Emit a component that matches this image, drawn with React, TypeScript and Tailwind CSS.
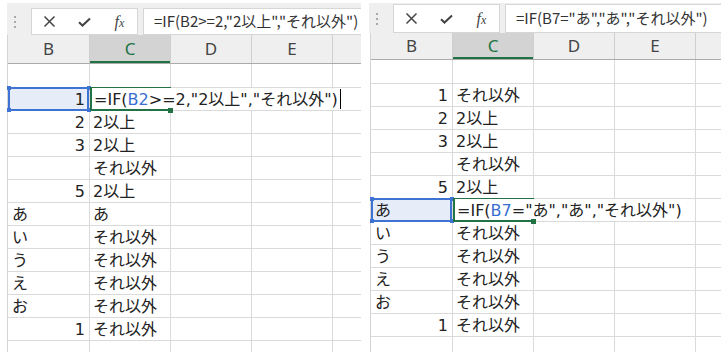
import React from "react";

type Row = { b: string; c?: string; edit?: boolean };
type Part = { t: string; blue?: boolean };

const JP = "font-['Noto_Sans_CJK_JP','Noto_Sans_CJK_SC',sans-serif]";
const CELL = "font-['DejaVu_Sans','Noto_Sans_CJK_JP',sans-serif]";

const leftRows: Row[] = [
  { b: "1", edit: true },
  { b: "2", c: "2以上" },
  { b: "3", c: "2以上" },
  { b: "", c: "それ以外" },
  { b: "5", c: "2以上" },
  { b: "あ", c: "あ" },
  { b: "い", c: "それ以外" },
  { b: "う", c: "それ以外" },
  { b: "え", c: "それ以外" },
  { b: "お", c: "それ以外" },
  { b: "1", c: "それ以外" },
  { b: "" },
];

const rightRows: Row[] = [
  { b: "1", c: "それ以外" },
  { b: "2", c: "2以上" },
  { b: "3", c: "2以上" },
  { b: "", c: "それ以外" },
  { b: "5", c: "2以上" },
  { b: "あ", edit: true },
  { b: "い", c: "それ以外" },
  { b: "う", c: "それ以外" },
  { b: "え", c: "それ以外" },
  { b: "お", c: "それ以外" },
  { b: "1", c: "それ以外" },
  { b: "" },
];

const isNum = (s: string) => /^\d+$/.test(s);

function FormulaBar({ text, barCls, boxCls }: { text: string; barCls: string; boxCls: string }) {
  return (
    <div className={`flex items-start bg-[#efefef] ${barCls}`}>
      {/* grip dots */}
      <div className={`w-[24px] shrink-0 flex flex-col items-start justify-center gap-[3px] pl-[7px] ${boxCls}`}>
        <span className="w-[2px] h-[2px] bg-[#a8a8a8]" />
        <span className="w-[2px] h-[2px] bg-[#a8a8a8]" />
        <span className="w-[2px] h-[2px] bg-[#a8a8a8]" />
      </div>
      <div className={`w-[107px] shrink-0 flex bg-white border border-[#d6d6d6] ${boxCls}`}>
        <div className="w-[35px] flex items-center justify-center">
          <svg width="13" height="13" viewBox="0 0 13 13">
            <path d="M1.5 1.5L11.5 11.5M11.5 1.5L1.5 11.5" stroke="#444" strokeWidth="1.5" fill="none" />
          </svg>
        </div>
        <div className="w-[35px] flex items-center justify-center">
          <svg width="13" height="10" viewBox="0 0 13 10">
            <path d="M1 5.2L4.5 8.5L12 1.4" stroke="#444" strokeWidth="2" fill="none" />
          </svg>
        </div>
        <div className="w-[35px] flex items-center justify-center">
          <span className="font-['Liberation_Serif',serif] italic text-[16px] leading-none text-[#444]">
            f<span className="text-[12px]">x</span>
          </span>
        </div>
      </div>
      <div
        className={`ml-[5px] flex-1 min-w-0 flex items-center overflow-hidden whitespace-nowrap bg-white border border-r-0 border-[#d6d6d6] pl-[10px] text-[15px] text-[#333] ${JP} ${boxCls}`}
      >
        {text}
      </div>
    </div>
  );
}

function Header({ cls }: { cls: string }) {
  return (
    <div className={`flex bg-[#efefef] border-b border-[#ababab] text-[17px] text-[#444] font-['Noto_Sans',sans-serif] ${cls}`}>
      <div className="w-[82px] shrink-0 border-r border-[#cfcfcf] flex items-center justify-center">B</div>
      <div className="w-[81px] shrink-0 border-r border-[#cfcfcf] flex items-center justify-center bg-[#d3d3d3] text-[#217346] shadow-[inset_0_-2px_0_#217346]">
        C
      </div>
      <div className="w-[81px] shrink-0 border-r border-[#cfcfcf] flex items-center justify-center">D</div>
      <div className="w-[81px] shrink-0 border-r border-[#cfcfcf] flex items-center justify-center">E</div>
      <div className="flex-1" />
    </div>
  );
}

function DataRow({ row }: { row: Row }) {
  return (
    <div className="h-[23px] flex border-b border-[#dadada]">
      <div className={`w-[82px] shrink-0 border-r border-[#dadada] flex items-end px-[4px] ${isNum(row.b) ? "justify-end" : "justify-start"}`}>
        <span className="leading-[20px]">{row.b}</span>
      </div>
      <div className="w-[81px] shrink-0 border-r border-[#dadada] flex items-end px-[3px]">
        <span className="leading-[20px] whitespace-nowrap">{row.c}</span>
      </div>
      <div className="w-[81px] shrink-0 border-r border-[#dadada]" />
      <div className="w-[81px] shrink-0 border-r border-[#dadada]" />
      <div className="flex-1" />
    </div>
  );
}

function EditRow({ row, parts, caret, toEnd }: { row: Row; parts: Part[]; caret?: boolean; toEnd?: boolean }) {
  return (
    <div className="h-[23px] flex border-b border-[#dadada]">
      {/* referenced cell */}
      <div className={`relative w-[82px] shrink-0 border-r border-[#dadada] bg-[#e6edf9] flex items-end px-[4px] ${isNum(row.b) ? "justify-end" : "justify-start"}`}>
        <span className="leading-[20px]">{row.b}</span>
        <div className="absolute -top-[1px] left-0 right-0 -bottom-[1px] border-2 border-[#3f73d3]" />
        <div className="absolute -top-[2px] -left-[1px] w-[4px] h-[4px] bg-[#3f73d3]" />
        <div className="absolute -top-[2px] -right-[2px] w-[4px] h-[4px] bg-[#3f73d3]" />
        <div className="absolute -bottom-[2px] -left-[1px] w-[4px] h-[4px] bg-[#3f73d3]" />
        <div className="absolute -bottom-[2px] -right-[2px] w-[4px] h-[4px] bg-[#3f73d3]" />
      </div>
      {/* editing cell, text spills over the next columns */}
      <div className={`relative flex items-end pl-[4px] ${toEnd ? "flex-1" : "w-[243px] shrink-0 border-r border-[#dadada]"}`}>
        <span className="leading-[20px] whitespace-nowrap">
          {parts.map((p, i) => (
            <span key={i} className={p.blue ? "text-[#3a6fd0]" : ""}>
              {p.t}
            </span>
          ))}
        </span>
        {caret && <span className="ml-[2px] mb-[1px] w-[1px] h-[20px] bg-black" />}
        <div className="absolute left-0 -top-[1px] -bottom-[1px] w-[2px] bg-[#217346]" />
        <div className="absolute left-0 -top-[1px] w-[81px] h-[1px] bg-[#217346]" />
        <div className="absolute left-0 -bottom-[1px] w-[81px] h-[2px] bg-[#217346]" />
        <div className="absolute left-[78px] -bottom-[3px] w-[5px] h-[5px] bg-[#217346]" />
      </div>
      {!toEnd && <div className="flex-1" />}
    </div>
  );
}

function Sheet({
  bar,
  rows,
  parts,
  caret,
  toEnd,
  barCls,
  boxCls,
  headCls,
  gridCls,
}: {
  bar: string;
  rows: Row[];
  parts: Part[];
  caret?: boolean;
  toEnd?: boolean;
  barCls: string;
  boxCls: string;
  headCls: string;
  gridCls: string;
}) {
  return (
    <div className="h-[352px] flex flex-col pt-[3px] overflow-hidden">
      <FormulaBar text={bar} barCls={barCls} boxCls={boxCls} />
      <div className={`flex flex-col border-l border-[#d4d4d4] text-[16px] text-[#222] ${CELL} ${gridCls}`}>
        <Header cls={headCls} />
        <div className="h-[24px] flex border-b border-[#dadada]">
          <div className="w-[82px] shrink-0 border-r border-[#dadada]" />
          <div className="w-[81px] shrink-0 border-r border-[#dadada]" />
          <div className="w-[81px] shrink-0 border-r border-[#dadada]" />
          <div className="w-[81px] shrink-0 border-r border-[#dadada]" />
          <div className="flex-1" />
        </div>
        {rows.map((r, i) =>
          r.edit ? <EditRow key={i} row={r} parts={parts} caret={caret} toEnd={toEnd} /> : <DataRow key={i} row={r} />
        )}
      </div>
    </div>
  );
}

export default function App() {
  return (
    <div className="w-[727px] h-[352px] bg-white flex overflow-hidden">
      <div className="ml-[7px] w-[354px] shrink-0">
        <Sheet
          bar={'=IF(B2>=2,"2以上","それ以外")'}
          rows={leftRows}
          parts={[{ t: "=IF(" }, { t: "B2", blue: true }, { t: '>=2,"2以上","それ以外")' }]}
          caret
          toEnd
          barCls="h-[40px] pt-[5px]"
          boxCls="h-[27px]"
          headCls="h-[29px]"
          gridCls=""
        />
      </div>
      <div className="ml-[8px] w-[352px] shrink-0">
        <Sheet
          bar={'=IF(B7="あ","あ","それ以外")'}
          rows={rightRows}
          parts={[{ t: "=IF(" }, { t: "B7", blue: true }, { t: '="あ","あ","それ以外")' }]}
          barCls="h-[40px] pt-[1px]"
          boxCls="h-[29px]"
          headCls="h-[27px]"
          gridCls="ml-[1px]"
        />
      </div>
    </div>
  );
}
